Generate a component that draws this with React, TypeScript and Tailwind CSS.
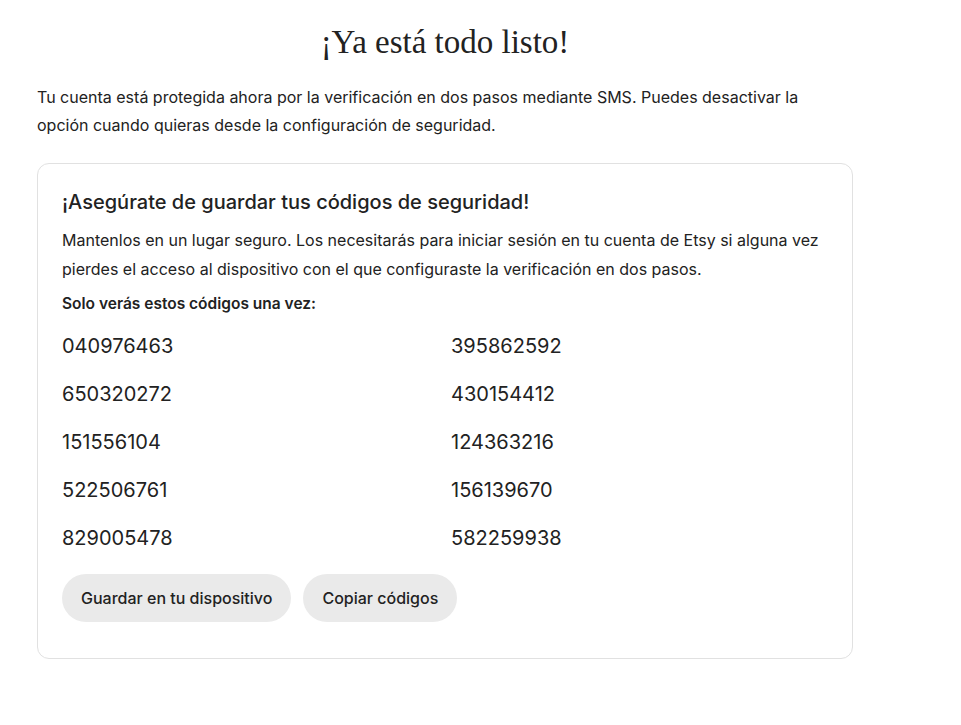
const codes = [
  "040976463",
  "395862592",
  "650320272",
  "430154412",
  "151556104",
  "124363216",
  "522506761",
  "156139670",
  "829005478",
  "582259938",
];

export default function App() {
  return (
    <div className="min-h-[725px] bg-white font-['Inter',sans-serif] text-[#222222]">
      <div className="w-[816px] ml-[37px] pt-[22px]">
        <h1 className="text-center font-['Liberation_Serif',serif] text-[33px] leading-[40px] font-normal text-[#222222]">
          ¡Ya está todo listo!
        </h1>

        <p className="mt-[21px] text-[16px] leading-[28px] text-[#222222]">
          Tu cuenta está protegida ahora por la verificación en dos pasos mediante SMS. Puedes desactivar la
          opción cuando quieras desde la configuración de seguridad.
        </p>

        {/* Codes card */}
        <div className="mt-[24px] rounded-xl border border-[#e1e1e1] px-6 pt-[23px] pb-9">
          <h2 className="text-[20px] leading-[30px] font-medium text-[#222222]">
            ¡Asegúrate de guardar tus códigos de seguridad!
          </h2>
          <p className="mt-[9px] text-[16px] leading-[29px]">
            Mantenlos en un lugar seguro. Los necesitarás para iniciar sesión en tu cuenta de Etsy si alguna vez
            pierdes el acceso al dispositivo con el que configuraste la verificación en dos pasos.
          </p>
          <p className="mt-[9px] text-[15.5px] leading-[22px] font-semibold">Solo verás estos códigos una vez:</p>

          <div className="mt-[17px] grid grid-cols-2 gap-x-3">
            {codes.map((c) => (
              <div key={c} className="h-[48px] text-[20px] leading-[28px]">
                {c}
              </div>
            ))}
          </div>

          <div className="mt-[2px] flex gap-3">
            <button className="h-12 rounded-full bg-[#eaeaea] px-[19px] text-[16px] font-medium text-[#222222]">
              Guardar en tu dispositivo
            </button>
            <button className="h-12 rounded-full bg-[#eaeaea] px-[19px] text-[16px] font-medium text-[#222222]">
              Copiar códigos
            </button>
          </div>
        </div>
      </div>
    </div>
  );
}
